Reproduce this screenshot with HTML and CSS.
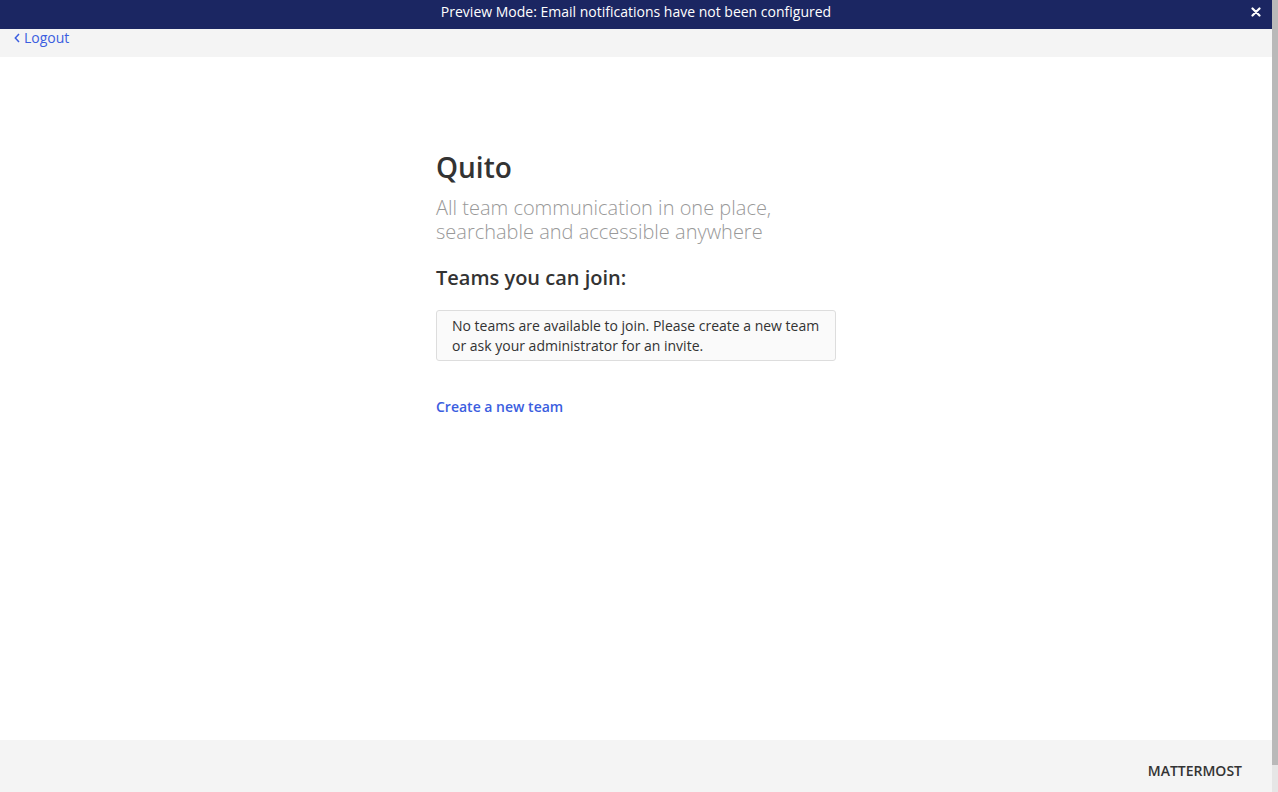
FILE: index.html
```html
<!DOCTYPE html>
<html lang="en">
<head>
<meta charset="utf-8">
<title>Mattermost</title>
<link rel="stylesheet" href="styles.css">
</head>
<body>
<div class="page">
  <div class="banner">
    <span class="banner-text">Preview Mode: Email notifications have not been configured</span>
    <a class="banner-close" href="#" aria-label="Close">
      <svg width="10" height="10" viewBox="0 0 10 10"><path d="M1.5 1.5 L8.5 8.5 M8.5 1.5 L1.5 8.5" stroke="#fff" stroke-width="2.2" stroke-linecap="round"/></svg>
    </a>
  </div>
  <div class="backbar">
    <a class="back-link" href="#">
      <svg class="chev" width="6" height="10" viewBox="0 0 6 10"><path d="M5 1 L1.3 5 L5 9" fill="none" stroke="currentColor" stroke-width="1.5"/></svg>
      <span>Logout</span>
    </a>
  </div>
  <main class="main">
    <div class="column">
      <h1 class="title">Quito</h1>
      <p class="subtitle">All team communication in one place, searchable and accessible anywhere</p>
      <h2 class="teams-heading">Teams you can join:</h2>
      <div class="notice">No teams are available to join. Please create a new team or ask your administrator for an invite.</div>
      <a class="create-link" href="#">Create a new team</a>
    </div>
  </main>
  <footer class="footer">
    <span class="brand">MATTERMOST</span>
  </footer>
</div>
<div class="scrollbar" aria-hidden="true"><div class="scroll-thumb"></div></div>
</body>
</html>
```

FILE: styles.css
```css
html {
  scrollbar-width: none;
}
html::-webkit-scrollbar {
  display: none;
}
body {
  margin: 0;
  font-family: "Open Sans", "Noto Sans", sans-serif;
  color: #333333;
  background: #ffffff;
}
a {
  text-decoration: none;
}
.page {
  display: flex;
  flex-direction: column;
  min-height: 820px;
  margin-right: 6px;
}
.scrollbar {
  position: fixed;
  top: 0;
  right: 0;
  width: 6px;
  height: 100vh;
  background: #e6e6e6;
}
.scroll-thumb {
  height: 765px;
  background: #b9b9b9;
}
.banner {
  position: relative;
  height: 29px;
  background: #1b2662;
  color: #ffffff;
  display: flex;
  align-items: flex-start;
  justify-content: center;
  font-size: 14px;
  line-height: 24px;
}
.banner-close {
  position: absolute;
  right: 11px;
  top: 7px;
  display: flex;
}
.backbar {
  height: 28px;
  background: #f4f4f4;
  padding-left: 14px;
}
.back-link {
  display: inline-flex;
  align-items: center;
  gap: 4px;
  color: #3b5ee0;
  font-size: 14px;
  line-height: 20px;
  position: relative;
  top: -3px;
}
.chev {
  margin-top: 1px;
}
.main {
  flex: 1;
  padding-top: 91px;
}
.column {
  width: 400px;
  margin: 0 auto;
  display: flex;
  flex-direction: column;
  align-items: flex-start;
}
.title {
  margin: 0;
  font-size: 28px;
  line-height: 38px;
  font-weight: 600;
  color: #333333;
}
.subtitle {
  margin: 10px 0 0;
  font-size: 20px;
  line-height: 24px;
  font-weight: 300;
  color: #999999;
}
.teams-heading {
  margin: 22px 0 0;
  font-size: 20px;
  line-height: 24px;
  font-weight: 600;
  color: #333333;
}
.notice {
  margin-top: 20px;
  box-sizing: border-box;
  width: 400px;
  padding: 5px 15px 4px;
  border: 1px solid #dddddd;
  border-radius: 3px;
  background: #fafafa;
  font-size: 14px;
  line-height: 20px;
  color: #333333;
}
.create-link {
  margin-top: 36px;
  font-size: 14px;
  line-height: 20px;
  font-weight: 600;
  color: #3b5ee0;
}
.footer {
  height: 80px;
  box-sizing: border-box;
  background: #f4f4f4;
  padding: 21px 30px 0;
  display: flex;
  justify-content: flex-end;
  align-items: flex-start;
}
.brand {
  font-size: 14px;
  line-height: 20px;
  font-weight: 600;
  color: #333333;
}
```
